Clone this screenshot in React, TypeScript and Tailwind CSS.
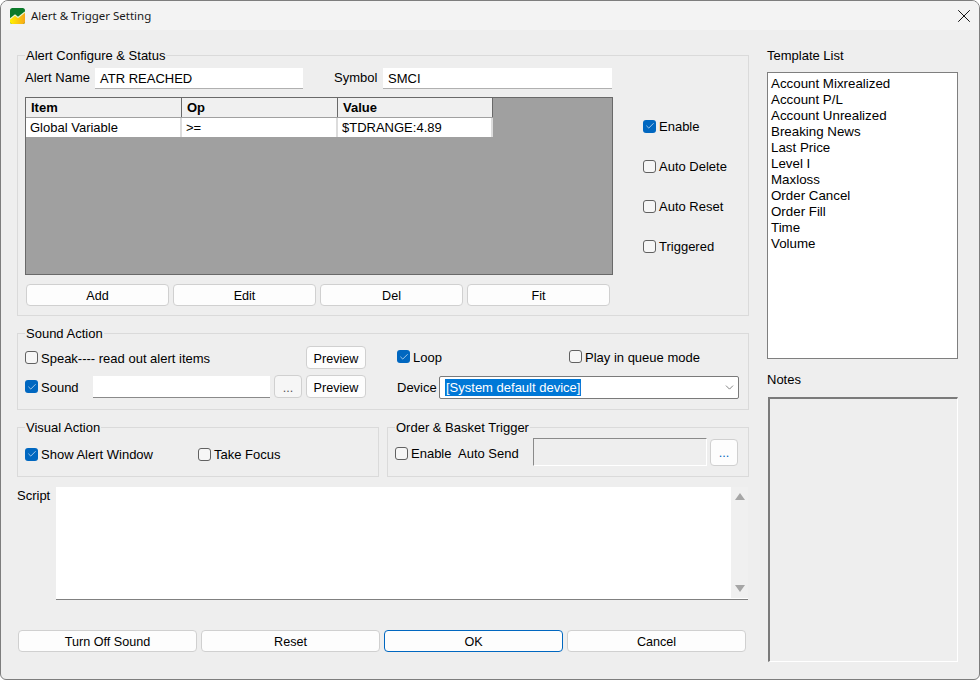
import React from 'react';
import { Check, ChevronDown, X } from 'lucide-react';

const Box = ({ checked }: { checked?: boolean }) =>
  checked ? (
    <span className="w-[13px] h-[13px] rounded-[3px] bg-[#0067c0] flex items-center justify-center shrink-0">
      <Check size={10} strokeWidth={1.5} color="#ffffff" />
    </span>
  ) : (
    <span className="w-[13px] h-[13px] rounded-[3px] bg-[#f6f6f6] border border-[#616161] shrink-0" />
  );

const CheckRow = ({ label, checked, className = '' }: { label: string; checked?: boolean; className?: string }) => (
  <label className={`flex items-center gap-[3px] h-4 whitespace-nowrap ${className}`}>
    <Box checked={checked} />
    <span className="pt-[2px]">{label}</span>
  </label>
);

const Btn = ({ label, className = '' }: { label: string; className?: string }) => (
  <button className={`bg-[#fdfdfd] border border-[#d0d0d0] rounded-[4px] text-[12.6px] pt-[2px] flex items-center justify-center shrink-0 ${className}`}>
    {label}
  </button>
);

const Group = ({ title, className = '', children }: { title: string; className?: string; children: React.ReactNode }) => (
  <fieldset className={`border border-[#dadada] ${className}`}>
    <legend className="ml-[7px] px-px h-4 leading-[18px] whitespace-nowrap">{title}</legend>
    {children}
  </fieldset>
);

const Arrow = ({ down }: { down?: boolean }) => (
  <svg width="10" height="7" viewBox="0 0 10 7">
    <path d={down ? 'M0 0H10L5 7Z' : 'M5 0L10 7H0Z'} fill="#a6a6a6" />
  </svg>
);

const templates = [
  'Account Mixrealized',
  'Account P/L',
  'Account Unrealized',
  'Breaking News',
  'Last Price',
  'Level I',
  'Maxloss',
  'Order Cancel',
  'Order Fill',
  'Time',
  'Volume',
];

const cell = 'flex items-center border-r-2 border-[#dcdcdc]';

export default function App() {
  return (
    <div className="w-[980px] h-[680px] overflow-hidden bg-[#eeeeee] border border-[#7d7d7d] rounded-t-[8px] rounded-b-[6px] flex flex-col text-[13px] leading-4 text-black font-['Liberation_Sans',sans-serif]">
      {/* title bar */}
      <div className="h-[29px] shrink-0 bg-[#f3f3f3] flex items-center pl-[9px] pr-[4px]">
        <svg width="15" height="16" viewBox="0 0 15 16" className="shrink-0">
          <defs>
            <linearGradient id="logoBottom" x1="0" y1="0" x2="1" y2="0">
              <stop offset="0" stopColor="#fff200" />
              <stop offset="1" stopColor="#f7a81b" />
            </linearGradient>
          </defs>
          <rect width="15" height="16" rx="2.5" fill="#0b7a2a" />
          <path d="M0 11L5 7L8 9.5L15 4V13.5a2.5 2.5 0 0 1-2.5 2.5H2.5a2.5 2.5 0 0 1-2.5-2.5Z" fill="url(#logoBottom)" />
          <path d="M0 11L5 7L8 9.5L15 4" fill="none" stroke="#eaf5d0" strokeWidth="1.2" />
        </svg>
        <span className="ml-[6px] text-[11.5px] font-['Noto_Sans',sans-serif] text-[#1a1a1a]">Alert &amp; Trigger Setting</span>
        <X size={22} strokeWidth={1} className="ml-auto text-black" />
      </div>

      <div className="flex-1 flex pl-4">
        {/* left column */}
        <div className="w-[732px] shrink-0 pt-[17px] flex flex-col">
          <Group title="Alert Configure &amp; Status" className="h-[269px]">
            <div className="flex">
              <div className="w-[596px] shrink-0 pl-[7px]">
                <div className="flex items-center h-[21px] mt-[5px]">
                  <span className="w-[70px] pb-[2px] whitespace-nowrap">Alert Name</span>
                  <div className="w-[208px] h-[21px] bg-white border-b border-[#b0b0b0] pl-[5px] pt-[2px] flex items-center">ATR REACHED</div>
                  <span className="ml-[31px] w-[49px] pb-[2px]">Symbol</span>
                  <div className="w-[229px] h-[21px] bg-white border-b border-[#b0b0b0] pl-[5px] pt-[2px] flex items-center">SMCI</div>
                </div>
                <div className="mt-[8px] w-[588px] h-[178px] bg-[#a0a0a0] border border-[#696969]">
                  <div className="flex w-[467px] h-5 font-bold bg-[#f0f0f0] border-b border-[#a0a0a0]">
                    <div className={`${cell} w-[156px] pl-[5px] !border-[#696969] !border-r`}>Item</div>
                    <div className={`${cell} w-[156px] pl-[5px] !border-[#696969] !border-r`}>Op</div>
                    <div className={`${cell} w-[155px] pl-[5px] !border-[#696969] !border-r`}>Value</div>
                  </div>
                  <div className="flex w-[467px] h-[19px] bg-white">
                    <div className={`${cell} w-[156px] pl-[4px]`}>Global Variable</div>
                    <div className={`${cell} w-[156px] pl-[4px]`}>&gt;=</div>
                    <div className={`${cell} w-[155px] pl-[4px]`}>$TDRANGE:4.89</div>
                  </div>
                </div>
                <div className="mt-[9px] flex gap-[4px] pl-px">
                  <Btn label="Add" className="w-[143px] h-[22px]" />
                  <Btn label="Edit" className="w-[143px] h-[22px]" />
                  <Btn label="Del" className="w-[143px] h-[22px]" />
                  <Btn label="Fit" className="w-[143px] h-[22px]" />
                </div>
              </div>
              <div className="pl-[29px] pt-[55px] flex flex-col gap-[24px]">
                <CheckRow label="Enable" checked />
                <CheckRow label="Auto Delete" />
                <CheckRow label="Auto Reset" />
                <CheckRow label="Triggered" />
              </div>
            </div>
          </Group>

          <Group title="Sound Action" className="mt-[9px] h-[85px]">
            <div className="flex">
              <div className="w-[379px] shrink-0 pl-[7px] pt-[5px]">
                <div className="flex items-center h-[23px]">
                  <CheckRow label="Speak---- read out alert items" className="w-[281px]" />
                  <Btn label="Preview" className="w-[60px] h-[23px]" />
                </div>
                <div className="flex items-center h-[23px] mt-[6px]">
                  <CheckRow label="Sound" checked className="w-[68px]" />
                  <div className="w-[177px] h-[22px] bg-white border-b border-[#8a8a8a]" />
                  <Btn label="..." className="w-[28px] h-[23px] ml-[4px] !bg-[#f6f6f6] text-[#555555]" />
                  <Btn label="Preview" className="w-[60px] h-[23px] ml-[4px]" />
                </div>
              </div>
              <div className="pt-[4px] flex-1">
                <div className="flex items-center h-[23px]">
                  <CheckRow label="Loop" checked className="w-[172px]" />
                  <CheckRow label="Play in queue mode" />
                </div>
                <div className="flex items-center h-[23px] mt-[8px]">
                  <span className="w-[42px]">Device</span>
                  <div className="w-[300px] h-[23px] bg-white border border-[#7a7a7a] rounded-[2px] flex items-center pl-[5px] pr-[2px]">
                    <span className="bg-[#0078d7] text-white px-px pt-px">[System default device]</span>
                    <ChevronDown size={13} strokeWidth={1.2} className="ml-auto text-[#444444]" />
                  </div>
                </div>
              </div>
            </div>
          </Group>

          <div className="flex mt-[9px] gap-[8px]">
            <Group title="Visual Action" className="w-[362px] h-[58px]">
              <div className="flex items-center pl-[7px] pt-[11px]">
                <CheckRow label="Show Alert Window" checked className="w-[173px]" />
                <CheckRow label="Take Focus" />
              </div>
            </Group>
            <Group title="Order &amp; Basket Trigger" className="w-[362px] h-[58px]">
              <div className="flex items-center pl-[7px] pt-[3px]">
                <CheckRow label="Enable" className="w-[63px] mt-[2px]" />
                <span className="w-[75px] pt-[4px]">Auto Send</span>
                <div className="w-[174px] h-[28px] bg-[#eeeeee] border-l border-t border-[#8a8a8a] border-r border-b !border-r-white !border-b-white" />
                <Btn label="..." className="w-[28px] h-[27px] ml-[3px] text-[#0067c0]" />
              </div>
            </Group>
          </div>

          <div className="flex mt-[10px]">
            <span className="w-[39px] pt-[1px]">Script</span>
            <div className="w-[692px] h-[113px] bg-white border-b border-[#808080] flex justify-end">
              <div className="w-[17px] mb-px bg-[#f0f0f0] flex flex-col items-center justify-between py-[6px]">
                <Arrow />
                <Arrow down />
              </div>
            </div>
          </div>

          <div className="mt-[30px] flex gap-[4px] pl-px">
            <Btn label="Turn Off Sound" className="w-[179px] h-[22px]" />
            <Btn label="Reset" className="w-[179px] h-[22px]" />
            <Btn label="OK" className="w-[179px] h-[22px] !border-[#0067c0]" />
            <Btn label="Cancel" className="w-[179px] h-[22px]" />
          </div>
        </div>

        {/* right column */}
        <div className="w-[191px] ml-[18px] shrink-0 pt-[17px] flex flex-col">
          <div className="h-4 leading-[18px]">Template List</div>
          <div className="mt-[9px] h-[287px] bg-white border border-[#7f7f7f] pl-[3px] pt-[2px] text-[13.33px]">
            {templates.map((t) => (
              <div key={t} className="h-4 leading-[18px]">{t}</div>
            ))}
          </div>
          <div className="mt-3 h-4 leading-[18px]">Notes</div>
          <div className="mt-[10px] ml-px w-[190px] h-[265px] bg-[#eeeeee] border-l-2 border-t-2 border-[#7a7a7a] border-r border-b !border-r-white !border-b-white" />
        </div>
      </div>
    </div>
  );
}
